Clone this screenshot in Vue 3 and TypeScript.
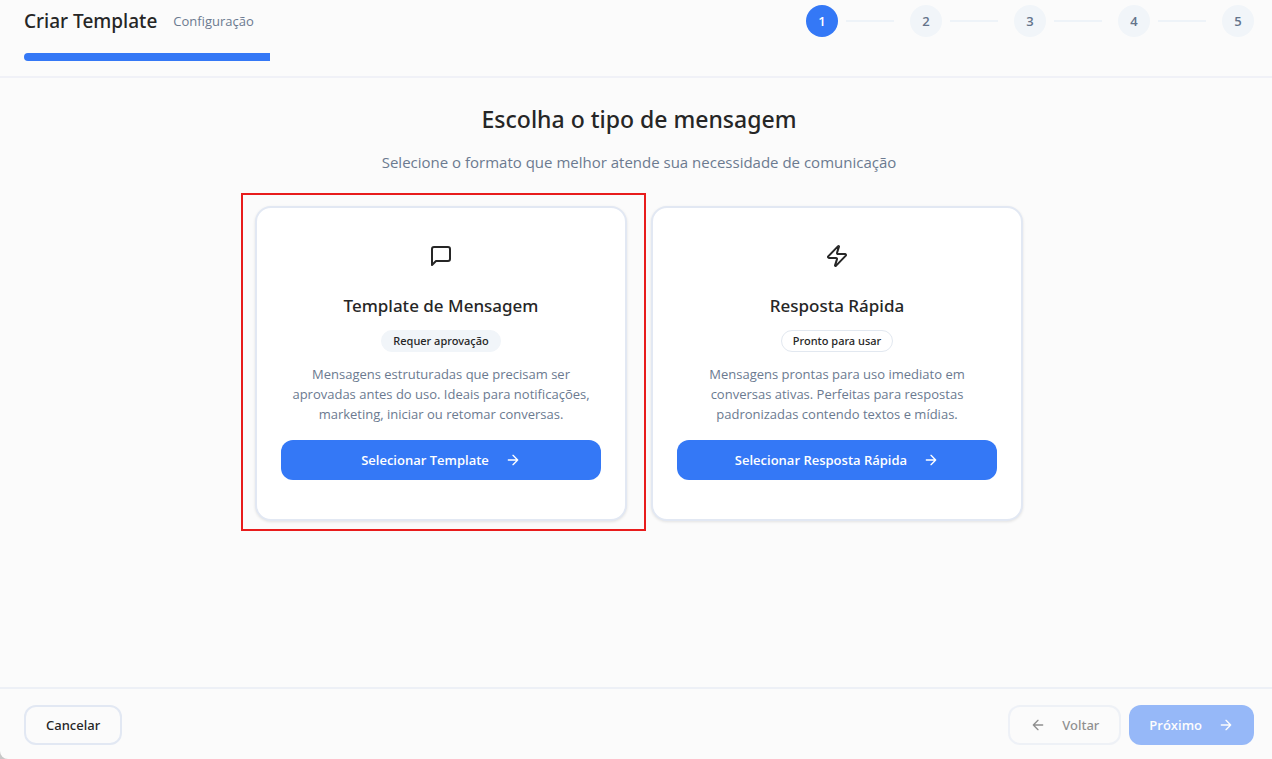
<script setup lang="ts">
import { computed, ref } from 'vue'

interface MessageType {
  id: string
  title: string
  badge: string
  outlined: boolean
  description: string
  action: string
  highlighted: boolean
}

const steps = [1, 2, 3, 4, 5]
const currentStep = ref(1)
const progress = computed(() => `${(currentStep.value / steps.length) * 100}%`)

const messageTypes: MessageType[] = [
  {
    id: 'template',
    title: 'Template de Mensagem',
    badge: 'Requer aprovação',
    outlined: false,
    description:
      'Mensagens estruturadas que precisam ser aprovadas antes do uso. Ideais para notificações, marketing, iniciar ou retomar conversas.',
    action: 'Selecionar Template',
    highlighted: true,
  },
  {
    id: 'quick',
    title: 'Resposta Rápida',
    badge: 'Pronto para usar',
    outlined: true,
    description:
      'Mensagens prontas para uso imediato em conversas ativas. Perfeitas para respostas padronizadas contendo textos e mídias.',
    action: 'Selecionar Resposta Rápida',
    highlighted: false,
  },
]
</script>

<template>
  <div class="page">
    <header class="header">
      <div class="header-row">
        <div class="heading">
          <h1 class="title">Criar Template</h1>
          <span class="stage">Configuração</span>
        </div>
        <ol class="steps">
          <li v-for="step in steps" :key="step" class="step">
            <span class="dot" :class="{ active: step === currentStep }">{{ step }}</span>
            <span v-if="step < steps.length" class="line"></span>
          </li>
        </ol>
      </div>
      <div class="track">
        <div class="bar" :style="{ width: progress }"></div>
      </div>
    </header>

    <main class="main">
      <h2 class="question">Escolha o tipo de mensagem</h2>
      <p class="hint">Selecione o formato que melhor atende sua necessidade de comunicação</p>

      <div class="cards">
        <section v-for="type in messageTypes" :key="type.id" class="card">
          <svg class="card-icon" viewBox="0 0 24 24" aria-hidden="true">
            <path
              v-if="type.id === 'template'"
              d="M21 15a2 2 0 0 1-2 2H7l-4 4V5a2 2 0 0 1 2-2h14a2 2 0 0 1 2 2z"
            />
            <path
              v-else
              d="M4 14a1 1 0 0 1-.78-1.63l9.9-10.2a.5.5 0 0 1 .86.46l-1.92 6.02A1 1 0 0 0 13 10h7a1 1 0 0 1 .78 1.63l-9.9 10.2a.5.5 0 0 1-.86-.46l1.92-6.02A1 1 0 0 0 11 14z"
            />
          </svg>
          <h3 class="card-title">{{ type.title }}</h3>
          <span class="badge" :class="{ outlined: type.outlined }">{{ type.badge }}</span>
          <p class="description">{{ type.description }}</p>
          <button type="button" class="button primary">
            {{ type.action }}
            <svg class="arrow" viewBox="0 0 24 24" aria-hidden="true"><path d="M5 12h14M12 5l7 7-7 7" /></svg>
          </button>
          <span v-if="type.highlighted" class="highlight"></span>
        </section>
      </div>
    </main>

    <footer class="footer">
      <button type="button" class="button outline">Cancelar</button>
      <div class="nav">
        <button type="button" class="button outline" disabled>
          <svg class="arrow" viewBox="0 0 24 24" aria-hidden="true"><path d="M19 12H5M12 19l-7-7 7-7" /></svg>
          Voltar
        </button>
        <button type="button" class="button primary" disabled>
          Próximo
          <svg class="arrow" viewBox="0 0 24 24" aria-hidden="true"><path d="M5 12h14M12 5l7 7-7 7" /></svg>
        </button>
      </div>
    </footer>
  </div>
</template>

<style>
html {
  background: #c8c8c8;
}
</style>

<style scoped>
.page {
  box-sizing: border-box;
  display: flex;
  flex-direction: column;
  min-height: 100vh;
  background: #fbfbfb;
  border-bottom-left-radius: 8px;
  color: #262626;
  font-family: 'Segoe UI', 'Open Sans', 'Noto Sans', sans-serif;
}

.header {
  padding: 5px 18px 15px 24px;
  border-bottom: 2px solid #f0f1f7;
}

.header-row {
  display: flex;
  justify-content: space-between;
  align-items: center;
}

.heading {
  display: flex;
  align-items: center;
  gap: 16px;
}

.title,
.question,
.hint,
.card-title,
.description {
  margin: 0;
}

.title,
.question,
.card-title,
.badge,
.button.outline {
  font-family: 'Segoe UI', 'Noto Sans', 'Open Sans', sans-serif;
  font-weight: 500;
}

.title {
  font-size: 19px;
  line-height: 32px;
}

.stage {
  font-size: 13px;
  line-height: 32px;
  color: #6b7a90;
}

.steps {
  display: flex;
  margin: 0;
  padding: 0;
  list-style: none;
}

.step {
  display: flex;
  align-items: center;
}

.dot {
  width: 32px;
  height: 32px;
  border-radius: 50%;
  background: #f1f5f9;
  color: #64748b;
  font-size: 13px;
  line-height: 32px;
  font-weight: 600;
  text-align: center;
}

.dot.active {
  background: #3478f6;
  color: #fff;
}

.line {
  width: 48px;
  height: 2px;
  margin: 0 16px 0 8px;
  background: #eef3f8;
}

.track {
  height: 8px;
  margin-top: 16px;
  border-radius: 4px;
  overflow: hidden;
}

.bar {
  height: 100%;
  background: #3478f6;
}

.main {
  flex: 1;
  padding: 25px 18px 24px 24px;
  text-align: center;
}

.question {
  font-size: 23px;
  line-height: 32px;
}

.hint {
  margin-top: 15px;
  font-size: 15px;
  line-height: 24px;
  color: #6b7a90;
}

.cards {
  display: grid;
  grid-template-columns: 1fr 1fr;
  gap: 24px;
  max-width: 768px;
  margin: 32px auto 0;
}

.card {
  position: relative;
  display: flex;
  flex-direction: column;
  align-items: center;
  padding: 24px 24px 39px;
  border: 2px solid #e2e8f3;
  border-radius: 16px;
  background: #fff;
  box-shadow: 0 1px 3px rgba(0, 0, 0, 0.1);
}

.card-icon {
  width: 24px;
  height: 24px;
  margin: 12px;
  fill: none;
  stroke: currentColor;
  stroke-width: 2;
  stroke-linecap: round;
  stroke-linejoin: round;
}

.card-title {
  margin-top: 12px;
  font-size: 17px;
  line-height: 28px;
}

.badge {
  margin-top: 10px;
  padding: 0 11px;
  border: 1px solid #f1f5f9;
  border-radius: 11px;
  background: #f1f5f9;
  font-size: 11px;
  line-height: 20px;
}

.badge.outlined {
  border-color: #e2e8f0;
  background: #fff;
}

.description {
  margin-top: 12px;
  padding: 0 8px;
  font-size: 13px;
  line-height: 20px;
  color: #6b7a90;
}

.button {
  box-sizing: border-box;
  display: flex;
  align-items: center;
  justify-content: center;
  gap: 16px;
  height: 40px;
  padding: 0 20px;
  border: 0;
  border-radius: 12px;
  background: transparent;
  color: #262626;
  font-family: inherit;
  font-size: 13px;
  line-height: 20px;
  font-weight: 600;
  white-space: nowrap;
}

.button.outline {
  border: 2px solid #e2e8f3;
}

.button.primary {
  background: #3478f6;
  color: #fff;
}

.button:disabled {
  opacity: 0.5;
}

.card .button {
  width: 100%;
  margin-top: 16px;
}

.arrow {
  width: 16px;
  height: 16px;
  fill: none;
  stroke: currentColor;
  stroke-width: 2;
  stroke-linecap: round;
  stroke-linejoin: round;
}

.highlight {
  position: absolute;
  inset: -15px -21px -12px -16px;
  border: 2px solid #e81c1c;
  pointer-events: none;
}

.footer {
  display: flex;
  justify-content: space-between;
  padding: 16px 18px 14px 24px;
  border-top: 2px solid #edf0f6;
}

.nav {
  display: flex;
  gap: 8px;
}
</style>
